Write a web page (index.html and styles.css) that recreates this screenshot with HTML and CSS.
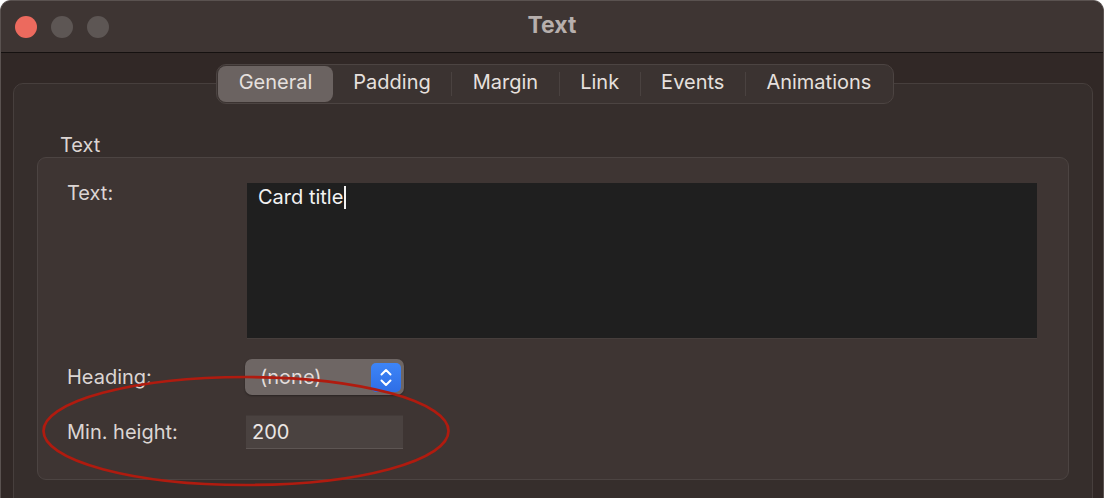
FILE: index.html
```html
<!DOCTYPE html>
<html>
<head>
<meta charset="utf-8">
<link rel="stylesheet" href="styles.css">
</head>
<body>
<div class="window">
  <div class="titlebar">
    <div class="lights">
      <span class="light red"></span>
      <span class="light grey"></span>
      <span class="light grey"></span>
    </div>
    <div class="title">Text</div>
  </div>
  <div class="content">
    <div class="tabs-row">
      <div class="tabs">
        <div class="tab selected">General</div>
        <div class="tab">Padding</div>
        <div class="sep"></div>
        <div class="tab">Margin</div>
        <div class="sep"></div>
        <div class="tab">Link</div>
        <div class="sep"></div>
        <div class="tab">Events</div>
        <div class="sep"></div>
        <div class="tab">Animations</div>
      </div>
    </div>
    <div class="panel">
      <div class="group-label">Text</div>
      <div class="group">
        <div class="row row-text">
          <div class="label">Text:</div>
          <div class="textarea"><span>Card title</span><span class="caret"></span></div>
        </div>
        <div class="row">
          <div class="label">Heading:</div>
          <div class="popup">
            <span class="popup-text">(none)</span>
            <span class="stepper">
              <svg width="30" height="29" viewBox="0 0 30 29">
                <path d="M10.5 11.5 L15 7 L19.5 11.5" fill="none" stroke="#fff" stroke-width="2" stroke-linecap="round" stroke-linejoin="round"/>
                <path d="M10.5 17.5 L15 22 L19.5 17.5" fill="none" stroke="#fff" stroke-width="2" stroke-linecap="round" stroke-linejoin="round"/>
              </svg>
            </span>
          </div>
        </div>
        <div class="row">
          <div class="label">Min. height:</div>
          <div class="input">200</div>
        </div>
      </div>
    </div>
  </div>
  <svg class="annotation" width="420" height="120" viewBox="0 0 420 120">
    <ellipse cx="204" cy="56" rx="202.5" ry="54" fill="none" stroke="#b01b0f" stroke-width="2.7"/>
  </svg>
</div>
</body>
</html>
```
FILE: styles.css
```css
* { box-sizing: border-box; }
html, body { margin: 0; padding: 0; }
body {
  background: #ffffff;
  width: 1107px;
  height: 498px;
  overflow: hidden;
  font-family: "Inter", "Noto Sans", sans-serif;
}
.window {
  position: relative;
  width: 1104px;
  height: 498px;
  background: #312826;
  border: 1px solid #5a5250;
  border-bottom: none;
  border-radius: 11px 11px 0 0;
  overflow: hidden;
}
.titlebar {
  height: 52px;
  background: #3e3533;
  border-bottom: 1px solid #151110;
  display: flex;
  align-items: center;
  position: relative;
}
.lights {
  display: flex;
  gap: 14px;
  padding-left: 14px;
}
.light {
  width: 22px;
  height: 22px;
  border-radius: 50%;
  display: block;
}
.light.red { background: #ec6a5e; }
.light.grey { background: #5d5654; }
.title {
  position: absolute;
  left: 0;
  right: 0;
  text-align: center;
  top: 10px;
  font-weight: 700;
  font-size: 23px;
  line-height: 28px;
  color: #b7afad;
}
.content {
  padding: 11px 10px 0 12px;
}
.tabs-row {
  display: flex;
  justify-content: center;
  position: relative;
  z-index: 1;
  padding-left: 4px;
}
.tabs {
  display: flex;
  align-items: center;
  height: 40px;
  padding: 1px;
  background: #3b3331;
  border: 1px solid #4c4442;
  border-radius: 10px;
}
.tab {
  height: 36px;
  display: flex;
  align-items: center;
  padding: 0 20.5px 5px 20.5px;
  font-size: 20px;
  color: #e6e0de;
  border-radius: 8px;
}
.tab.selected {
  background: #6b6361;
}
.sep {
  width: 1px;
  height: 24px;
  background: #4a4240;
}
.panel {
  margin-top: -21px;
  height: 430px;
  background: #362e2c;
  border: 1px solid #473f3d;
  border-radius: 10px;
  padding: 49px 23px 0 23px;
}
.group-label {
  font-size: 20px;
  line-height: 24px;
  color: #dcd5d3;
  padding-left: 23px;
  margin-bottom: 0;
}
.group {
  height: 323px;
  background: #3e3533;
  border: 1px solid #4c4442;
  border-radius: 9px;
  padding: 25px 31px 0 29px;
  display: flex;
  flex-direction: column;
  gap: 20px;
}
.row {
  display: flex;
  align-items: center;
}
.row-text { align-items: flex-start; margin-bottom: 1px; }
.label {
  width: 179px;
  flex: none;
  font-size: 20px;
  line-height: 24px;
  color: #dcd5d3;
  padding-top: 0;
}
.row-text .label { margin-top: -2px; }
.textarea {
  flex: 1;
  margin-left: 1px;
  height: 155px;
  background: #1f1f1f;
  box-shadow: 0 1px 0 #463e3c;
  padding: 2px 11px 0;
  font-size: 20px;
  line-height: 24px;
  color: #f2f2f2;
  display: flex;
  align-items: flex-start;
}
.caret {
  display: block;
  width: 1.5px;
  height: 23px;
  background: #f2f2f2;
  margin-top: 1px;
  margin-left: 1px;
}
.popup {
  width: 159px;
  height: 36px;
  margin-left: -1px;
  background: #6e6664;
  border-radius: 7px;
  box-shadow: 0 1px 2px rgba(0,0,0,0.35);
  display: flex;
  align-items: center;
  justify-content: space-between;
  padding: 0 3px 0 15px;
}
.popup-text {
  font-size: 20px;
  color: #e3dddb;
}
.stepper {
  width: 30px;
  height: 29px;
  border-radius: 5px;
  background: linear-gradient(#3d85f7, #2f6ee6);
  display: block;
}
.stepper svg { display: block; }
.input {
  width: 157px;
  height: 34px;
  background: #4a4240;
  border-top: 1px solid #433b39;
  border-bottom: 1px solid #5d5553;
  padding: 0 6px;
  display: flex;
  align-items: center;
  font-size: 20px;
  color: #ebe6e4;
}
.annotation {
  position: absolute;
  left: 41px;
  top: 374px;
  pointer-events: none;
  z-index: 5;
}
```
